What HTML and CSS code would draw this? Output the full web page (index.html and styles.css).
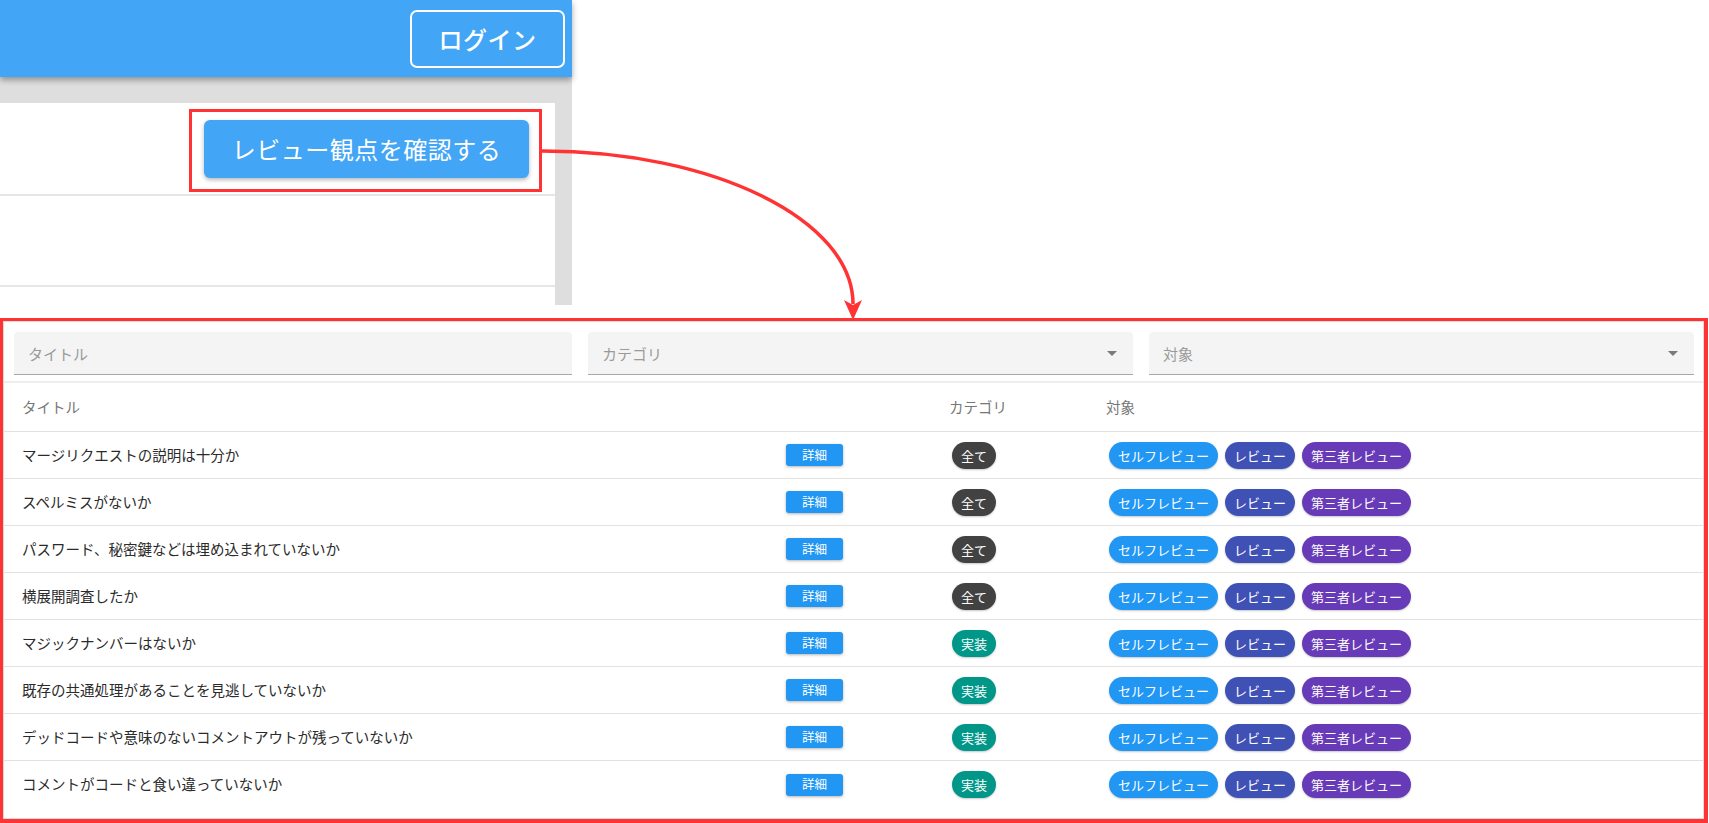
FILE: index.html
```html
<!DOCTYPE html>
<html lang="ja">
<head>
<meta charset="utf-8">
<title>レビュー観点</title>
<link rel="stylesheet" href="styles.css">
</head>
<body>
<div class="page">
  <section class="shot">
    <header class="appbar">
      <button class="login">ログイン</button>
    </header>
    <div class="shot-body">
      <div class="card">
        <div class="card-row first">
          <div class="mark">
            <button class="review-btn">レビュー観点を確認する</button>
          </div>
        </div>
        <div class="card-row second"></div>
      </div>
    </div>
  </section>

  <section class="detail">
    <div class="detail-inner">
      <div class="filters">
        <div class="field"><span class="ph">タイトル</span></div>
        <div class="field select"><span class="ph">カテゴリ</span><span class="caret"></span></div>
        <div class="field select"><span class="ph">対象</span><span class="caret"></span></div>
      </div>
      <div class="table">
        <div class="tr head">
          <div class="td c1">タイトル</div>
          <div class="td c2"></div>
          <div class="td c3">カテゴリ</div>
          <div class="td c4">対象</div>
        </div>
        <div class="tr">
          <div class="td c1">マージリクエストの説明は十分か</div>
          <div class="td c2"><button class="more">詳細</button></div>
          <div class="td c3"><span class="chip all">全て</span></div>
          <div class="td c4"><span class="chip self">セルフレビュー</span><span class="chip rev">レビュー</span><span class="chip third">第三者レビュー</span></div>
        </div>
        <div class="tr">
          <div class="td c1">スペルミスがないか</div>
          <div class="td c2"><button class="more">詳細</button></div>
          <div class="td c3"><span class="chip all">全て</span></div>
          <div class="td c4"><span class="chip self">セルフレビュー</span><span class="chip rev">レビュー</span><span class="chip third">第三者レビュー</span></div>
        </div>
        <div class="tr">
          <div class="td c1">パスワード、秘密鍵などは埋め込まれていないか</div>
          <div class="td c2"><button class="more">詳細</button></div>
          <div class="td c3"><span class="chip all">全て</span></div>
          <div class="td c4"><span class="chip self">セルフレビュー</span><span class="chip rev">レビュー</span><span class="chip third">第三者レビュー</span></div>
        </div>
        <div class="tr">
          <div class="td c1">横展開調査したか</div>
          <div class="td c2"><button class="more">詳細</button></div>
          <div class="td c3"><span class="chip all">全て</span></div>
          <div class="td c4"><span class="chip self">セルフレビュー</span><span class="chip rev">レビュー</span><span class="chip third">第三者レビュー</span></div>
        </div>
        <div class="tr">
          <div class="td c1">マジックナンバーはないか</div>
          <div class="td c2"><button class="more">詳細</button></div>
          <div class="td c3"><span class="chip impl">実装</span></div>
          <div class="td c4"><span class="chip self">セルフレビュー</span><span class="chip rev">レビュー</span><span class="chip third">第三者レビュー</span></div>
        </div>
        <div class="tr">
          <div class="td c1">既存の共通処理があることを見逃していないか</div>
          <div class="td c2"><button class="more">詳細</button></div>
          <div class="td c3"><span class="chip impl">実装</span></div>
          <div class="td c4"><span class="chip self">セルフレビュー</span><span class="chip rev">レビュー</span><span class="chip third">第三者レビュー</span></div>
        </div>
        <div class="tr">
          <div class="td c1">デッドコードや意味のないコメントアウトが残っていないか</div>
          <div class="td c2"><button class="more">詳細</button></div>
          <div class="td c3"><span class="chip impl">実装</span></div>
          <div class="td c4"><span class="chip self">セルフレビュー</span><span class="chip rev">レビュー</span><span class="chip third">第三者レビュー</span></div>
        </div>
        <div class="tr">
          <div class="td c1">コメントがコードと食い違っていないか</div>
          <div class="td c2"><button class="more">詳細</button></div>
          <div class="td c3"><span class="chip impl">実装</span></div>
          <div class="td c4"><span class="chip self">セルフレビュー</span><span class="chip rev">レビュー</span><span class="chip third">第三者レビュー</span></div>
        </div>
      </div>
    </div>
  </section>

  <svg class="arrow" width="1709" height="823" viewBox="0 0 1709 823" aria-hidden="true">
    <path d="M542 151 C714 151 853 220 853 304" fill="none" stroke="#ff3333" stroke-width="3.5"/>
    <polygon points="844,300 853,305 862,300 853,320" fill="#ff3333"/>
  </svg>
</div>
</body>
</html>
```

FILE: styles.css
```css
* { box-sizing: border-box; }
html, body { margin: 0; padding: 0; background: #ffffff; }
body {
  font-family: "Noto Sans CJK JP", "Noto Sans", "Liberation Sans", sans-serif;
  color: #212121;
  width: 1709px;
  height: 823px;
  overflow: hidden;
}
button { font-family: inherit; border: none; cursor: pointer; padding: 0; }

.page { position: relative; width: 1709px; height: 823px; }

/* ---------- cropped screenshot (top-left) ---------- */
.shot { width: 572px; height: 305px; display: flex; flex-direction: column; }
.appbar {
  position: relative;
  z-index: 2;
  height: 77px;
  background: #42a5f5;
  display: flex;
  justify-content: flex-end;
  align-items: flex-start;
  padding: 10px 7px 0 0;
  box-shadow: 0 3px 6px rgba(0, 0, 0, 0.35);
}
.login {
  width: 155px;
  height: 58px;
  background: transparent;
  border: 2px solid #ffffff;
  border-radius: 7px;
  color: #ffffff;
  font-size: 24px;
  font-weight: 500;
  line-height: 1;
  letter-spacing: 0.5px;
}
.shot-body {
  flex: 1;
  background: #dedede;
  padding: 26px 17px 0 0;
  display: flex;
}
.card { flex: 1; background: #ffffff; display: flex; flex-direction: column; }
.card-row { border-bottom: 2px solid #e6e6e6; }
.card-row.first {
  height: 93px;
  display: flex;
  justify-content: flex-end;
  align-items: flex-start;
  padding: 6px 13px 0 0;
}
.card-row.second { height: 91px; }
.mark {
  border: 3px solid #ff3333;
  padding: 8px 10px 11px 12px;
}
.review-btn {
  width: 325px;
  height: 58px;
  background: #42a5f5;
  color: #ffffff;
  border-radius: 6px;
  font-size: 24px;
  line-height: 1;
  letter-spacing: 0.5px;
  box-shadow: 0 2px 4px rgba(0, 0, 0, 0.28);
}

/* ---------- detail table ---------- */
.detail {
  margin-top: 13px;
  width: 1708px;
  height: 505px;
  border: 3px solid #ff3333;
  border-width: 3px 4px 4px 3px;
}
.detail-inner {
  height: 100%;
  border: 1px solid #dcdcdc;
  padding-top: 10px;
}
.filters {
  display: grid;
  grid-template-columns: 558px 1fr 1fr;
  column-gap: 16px;
  padding: 0 9px 0 10px;
}
.field {
  height: 43px;
  background: #f4f4f4;
  border-bottom: 1px solid #a8a8a8;
  border-radius: 4px 4px 0 0;
  display: flex;
  align-items: center;
  justify-content: space-between;
  padding: 0 16px 0 14px;
}
.ph { font-size: 15px; color: #9a9a9a; line-height: 1; }
.caret {
  width: 0;
  height: 0;
  border-left: 5px solid transparent;
  border-right: 5px solid transparent;
  border-top: 5px solid #7a7a7a;
}

.table { margin-top: 6px; border-top: 2px solid #eeeeee; }
.tr {
  display: grid;
  grid-template-columns: 766px 163px 157px 1fr;
  height: 47px;
  align-items: center;
  border-bottom: 1px solid #e2e2e2;
  font-size: 14.5px;
  line-height: 1;
}
.tr:last-child { border-bottom: none; }
.tr.head { height: 49px; color: #777777; }
.td { padding-left: 16px; display: flex; align-items: center; }
.td.c1 { padding-left: 18px; color: inherit; }
.tr:not(.head) .td.c1 { color: #2b2b2b; }

.more {
  width: 57px;
  height: 22px;
  background: #2196f3;
  color: #ffffff;
  border-radius: 3px;
  font-size: 12.5px;
  line-height: 1;
  box-shadow: 0 1px 3px rgba(0, 0, 0, 0.3);
}
.chip {
  display: inline-flex;
  align-items: center;
  height: 27px;
  padding: 0 9px;
  border-radius: 14px;
  color: #ffffff;
  font-size: 13px;
  line-height: 1;
  margin-left: 3px;
  box-shadow: 0 1px 2px rgba(0, 0, 0, 0.22);
}
.chip + .chip { margin-left: 7px; }
.chip.all { background: #424242; }
.chip.impl { background: #009688; }
.chip.self { background: #2196f3; }
.chip.rev { background: #3f51b5; }
.chip.third { background: #673ab7; }

.arrow { position: absolute; left: 0; top: 0; pointer-events: none; }
```
